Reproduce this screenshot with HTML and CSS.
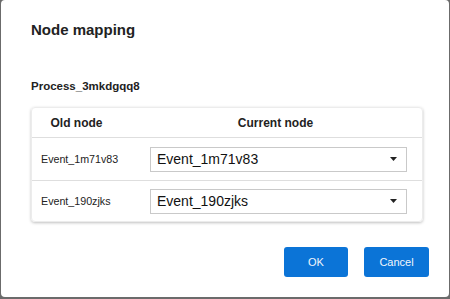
FILE: index.html
```html
<!DOCTYPE html>
<html lang="en">
<head>
    <meta charset="UTF-8">
    <meta name="viewport" content="width=device-width, initial-scale=1.0">
    <title>Node mapping</title>
    <link rel="stylesheet" href="styles.css">
</head>
<body>
    <div class="dialog">
        <h2 class="title">Node mapping</h2>

        <div class="process">Process_3mkdgqq8</div>

        <div class="card">
            <div class="row head">
                <div class="col-old">Old node</div>
                <div class="col-current">Current node</div>
            </div>
            <div class="row">
                <div class="col-old">Event_1m71v83</div>
                <div class="col-current">
                    <div class="select">
                        <span>Event_1m71v83</span>
                        <svg class="caret" width="7" height="4" viewBox="0 0 7 4"><path d="M0 0H7L3.5 4Z" fill="#222"/></svg>
                    </div>
                </div>
            </div>
            <div class="row last">
                <div class="col-old">Event_190zjks</div>
                <div class="col-current">
                    <div class="select">
                        <span>Event_190zjks</span>
                        <svg class="caret" width="7" height="4" viewBox="0 0 7 4"><path d="M0 0H7L3.5 4Z" fill="#222"/></svg>
                    </div>
                </div>
            </div>
        </div>

        <div class="buttons">
            <button class="btn">OK</button>
            <button class="btn">Cancel</button>
        </div>
    </div>
</body>
</html>
```

FILE: styles.css
```css
body {
    margin: 0;
    background-color: #6b6b6b;
    font-family: 'Liberation Sans', Arial, sans-serif;
    color: #222;
}

.dialog {
    width: 448px;
    height: 297px;
    margin-left: 1px;
    padding: 20px 20px 20px 30px;
    box-sizing: border-box;
    background-color: #fff;
    border-radius: 4px;
    display: flex;
    flex-direction: column;
}

.title {
    margin: 0;
    font-size: 15px;
    line-height: 20px;
    font-weight: bold;
}

.process {
    margin-top: 38px;
    font-size: 11.5px;
    line-height: 16px;
    font-weight: bold;
}

.card {
    margin-top: 13px;
    width: 392px;
    border: 1px solid #ececec;
    box-sizing: border-box;
    border-radius: 4px;
    box-shadow: 0 1px 3px rgba(0, 0, 0, 0.25);
}

.row {
    display: flex;
    align-items: center;
    height: 42px;
    border-bottom: 1px solid #dedede;
    font-size: 10.7px;
}

.row.head {
    height: 29px;
    font-size: 12px;
    font-weight: bold;
}

.row.last {
    height: 40px;
    border-bottom: none;
}

.col-old {
    width: 89px;
    padding-left: 9px;
    box-sizing: border-box;
}

.head .col-old {
    padding-left: 0;
    text-align: center;
}

.col-current {
    flex: 1;
    padding: 0 15px 0 29px;
}

.head .col-current {
    padding: 0 0 0 8px;
    text-align: center;
}

.select {
    height: 25px;
    border: 1px solid #c9c9c9;
    box-sizing: border-box;
    display: flex;
    align-items: center;
    justify-content: space-between;
    padding: 0 9px 0 6px;
    font-size: 14px;
    color: #111;
}

.buttons {
    margin-top: auto;
    display: flex;
    justify-content: flex-end;
    gap: 16px;
}

.btn {
    width: 64px;
    height: 30px;
    border: none;
    border-radius: 3px;
    background-color: #0b74d7;
    color: #f2f6fb;
    font-family: 'Liberation Sans', Arial, sans-serif;
    font-size: 11px;
    cursor: pointer;
}

.btn + .btn {
    width: 65px;
}
```
